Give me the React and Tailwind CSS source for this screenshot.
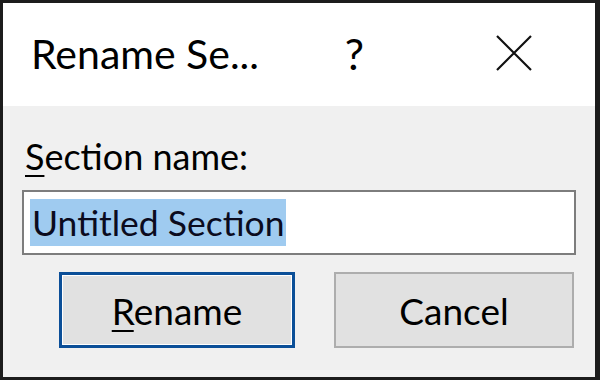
export default function App() {
  return (
    <div className="w-[600px] h-[380px] bg-white">
      <div
        className="flex h-full w-full flex-col border-[3px] border-r-[5px] border-[#1c1c1c] bg-[#f0f0f0]"
        style={{ fontFamily: 'Lato, "Open Sans", sans-serif' }}
      >
        {/* title bar */}
        <div className="flex h-[103px] shrink-0 items-center bg-white pb-[3px] pl-[28px] pr-[63px]">
          <span className="text-[41px] leading-none text-black">Rename Se...</span>
          <span className="ml-auto mr-[132px] text-[43px] leading-none text-black">?</span>
          <svg width="36" height="36" viewBox="0 0 36 36" className="shrink-0">
            <path d="M1 1 L35 35 M35 1 L1 35" stroke="#111" strokeWidth="2.2" fill="none" />
          </svg>
        </div>

        {/* body */}
        <div className="flex flex-1 flex-col px-[19px] pt-[28px]">
          <label className="pl-[3px] text-[36px] leading-[44px] text-black">
            <u className="underline decoration-[2px] underline-offset-[5px]">S</u>ection name:
          </label>

          <div className="mt-[12px] flex h-[65px] items-center border-2 border-[#7d7d7d] bg-white pl-[6px]">
            <span className="bg-[#9fcbf0] pl-[2px] pr-[2px] text-[35.5px] leading-[47px] text-[#0b0b1e]">
              Untitled Section
            </span>
          </div>

          <div className="mt-[17px] flex justify-end gap-[39px] pr-[2px]">
            <button className="flex h-[76px] w-[236px] items-center justify-center border-[3px] border-[#0b4f98] bg-[#e1e1e1] text-[37px] leading-none text-black shadow-[inset_0_0_0_1px_#ffffff]">
              <span>
                <u className="underline decoration-[2px] underline-offset-[5px]">R</u>ename
              </span>
            </button>
            <button className="flex h-[76px] w-[240px] items-center justify-center border-2 border-[#adadad] bg-[#e1e1e1] text-[37px] leading-none text-black">
              Cancel
            </button>
          </div>
        </div>
      </div>
    </div>
  )
}
